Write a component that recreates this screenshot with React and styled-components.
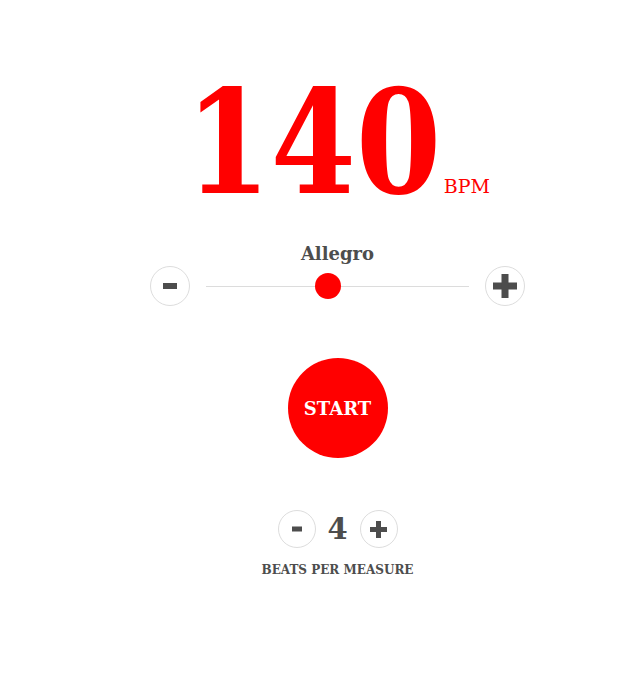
import React, { useState } from "react";
import styled, { createGlobalStyle } from "styled-components";

const GlobalStyle = createGlobalStyle`
  body {
    margin: 0;
    background: #fff;
    font-family: "DejaVu Serif", serif;
  }
`;

const Page = styled.div`
  display: flex;
  flex-direction: column;
  align-items: center;
  padding: 71px 0 0 42px;
  height: 696px;
  box-sizing: border-box;
`;

const Tempo = styled.div`
  display: flex;
  align-items: baseline;
  color: #ff0000;
`;

const Bpm = styled.span`
  display: inline-block;
  font-size: 144px;
  font-weight: 700;
  line-height: 1;
  transform: scaleX(0.85);
  margin: 0 -25px 0 -22px;
`;

const Unit = styled.span`
  font-size: 19px;
  margin-left: 5px;
`;

const Marking = styled.div`
  margin-top: 28px;
  font-size: 18px;
  font-weight: 600;
  color: #4d4d4d;
`;

const SliderRow = styled.div`
  display: flex;
  align-items: center;
  gap: 16px;
  width: 375px;
  margin-top: 2px;
`;

const RoundButton = styled.button`
  width: ${p => p.size}px;
  height: ${p => p.size}px;
  flex: none;
  border-radius: 50%;
  border: 1px solid #ddd;
  background: #fff;
  color: #4d4d4d;
  padding: 0;
  display: flex;
  align-items: center;
  justify-content: center;
  cursor: pointer;
`;

const Track = styled.div`
  flex: 1;
  height: 1px;
  background: #dcdcdc;
  position: relative;
`;

const Thumb = styled.div`
  position: absolute;
  top: 50%;
  width: 26px;
  height: 26px;
  border-radius: 50%;
  background: #ff0000;
  transform: translate(-50%, -50%);
`;

const StartButton = styled.button`
  margin-top: 52px;
  width: 100px;
  height: 100px;
  border-radius: 50%;
  border: none;
  background: #ff0000;
  color: #fff;
  font-family: inherit;
  font-size: 18px;
  font-weight: 700;
  cursor: pointer;
`;

const BeatsRow = styled.div`
  display: flex;
  align-items: center;
  gap: 9px;
  margin-top: 52px;
`;

const BeatsValue = styled.span`
  font-size: 29px;
  font-weight: 700;
  color: #4d4d4d;
  width: 26px;
  text-align: center;
`;

const Caption = styled.div`
  margin-top: 15px;
  font-size: 12px;
  font-weight: 600;
  color: #4d4d4d;
`;

const Sign = ({ plus, w, t }) => (
  <svg width={w} height={w} viewBox={`0 0 ${w} ${w}`} fill="currentColor">
    <rect x="0" y={(w - t) / 2} width={w} height={t} />
    {plus && <rect x={(w - t) / 2} y="0" width={t} height={w} />}
  </svg>
);

export default function App() {
  const [bpm, setBpm] = useState(140);
  const [beats, setBeats] = useState(4);
  const pos = ((bpm - 20) / (278 - 20)) * 100;

  return (
    <>
      <GlobalStyle />
      <Page>
        <Tempo>
          <Bpm>{bpm}</Bpm>
          <Unit>BPM</Unit>
        </Tempo>
        <Marking>Allegro</Marking>
        <SliderRow>
          <RoundButton size={40} aria-label="-" onClick={() => setBpm(bpm - 1)}>
            <Sign w={14} t={6} />
          </RoundButton>
          <Track>
            <Thumb style={{ left: `${pos}%` }} />
          </Track>
          <RoundButton size={40} aria-label="+" onClick={() => setBpm(bpm + 1)}>
            <Sign plus w={24} t={7} />
          </RoundButton>
        </SliderRow>
        <StartButton>START</StartButton>
        <BeatsRow>
          <RoundButton size={38} aria-label="-" onClick={() => setBeats(beats - 1)}>
            <Sign w={10} t={5} />
          </RoundButton>
          <BeatsValue>{beats}</BeatsValue>
          <RoundButton size={38} aria-label="+" onClick={() => setBeats(beats + 1)}>
            <Sign plus w={17} t={5} />
          </RoundButton>
        </BeatsRow>
        <Caption>BEATS PER MEASURE</Caption>
      </Page>
    </>
  );
}
